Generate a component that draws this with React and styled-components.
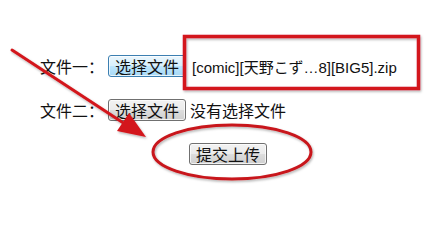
import React from "react";
import styled, { createGlobalStyle } from "styled-components";

const GlobalStyle = createGlobalStyle`
  html, body {
    margin: 0;
    padding: 0;
    background: #ffffff;
  }
`;

const Page = styled.div`
  position: relative;
  width: 432px;
  height: 227px;
  overflow: hidden;
  background: #ffffff;
  font-family: "Liberation Sans", "Noto Sans CJK SC", sans-serif;
  color: #111111;
`;

const Form = styled.form`
  display: flex;
  flex-direction: column;
  gap: 22px;
  padding: 55px 0 0 40px;
`;

const Row = styled.div`
  display: flex;
  align-items: center;
  height: 22px;
  padding-left: ${(props) => props.indent || "0"};
`;

const Label = styled.span`
  font-size: 16px;
  font-family: "Noto Sans CJK SC", sans-serif;
  margin-right: ${(props) => props.gap || "4px"};
`;

const Button = styled.button`
  height: 22px;
  padding: 0 6px;
  font-family: "Noto Sans CJK SC", sans-serif;
  font-size: 16px;
  line-height: 20px;
  color: #111111;
  border-radius: 3px;
  border: 1px solid ${(props) => (props.hover ? "#3c7fb1" : "#707070")};
  background: ${(props) =>
    props.hover
      ? "linear-gradient(#eaf6fd 0%, #d9f0fc 50%, #bee6fd 51%, #a7d9f5 100%)"
      : "linear-gradient(#f2f2f2 0%, #ebebeb 50%, #dddddd 51%, #cfcfcf 100%)"};
  box-shadow: inset 0 0 0 1px rgba(255, 255, 255, 0.7);
  margin-right: ${(props) => props.gap || "0"};
  cursor: default;
`;

const FileName = styled.span`
  font-size: 15px;
  font-family: "Liberation Sans", "Noto Sans CJK JP", sans-serif;
`;

const Status = styled.span`
  font-size: 16px;
  font-family: "Noto Sans CJK SC", sans-serif;
`;

const Overlay = styled.svg`
  position: absolute;
  left: 0;
  top: 0;
  width: 432px;
  height: 227px;
  pointer-events: none;
`;

function App() {
  return (
    <Page>
      <GlobalStyle />
      <Form>
        <Row>
          <Label>文件一：</Label>
          <Button type="button" hover gap="6px">选择文件</Button>
          <FileName>[comic][天野こず…8][BIG5].zip</FileName>
        </Row>
        <Row>
          <Label>文件二：</Label>
          <Button type="button" gap="4px">选择文件</Button>
          <Status>没有选择文件</Status>
        </Row>
        <Row indent="149px">
          <Button type="button">提交上传</Button>
        </Row>
      </Form>
      <Overlay viewBox="0 0 432 227">
        <defs>
          <filter id="sh" x="-10%" y="-10%" width="120%" height="130%">
            <feDropShadow dx="1" dy="1.5" stdDeviation="1" floodColor="#000" floodOpacity="0.3" />
          </filter>
        </defs>
        <g filter="url(#sh)">
          <rect x="184.5" y="36.5" width="234" height="52" fill="none" stroke="#d3171c" strokeWidth="3.5" />
          <ellipse cx="232" cy="152" rx="79" ry="27" fill="none" stroke="#c8161b" strokeWidth="3" />
          <line x1="12" y1="50" x2="128" y2="126" stroke="#d3171c" strokeWidth="3" strokeLinecap="round" />
          <polygon points="146,137 117,131 129,113" fill="#d3171c" />
        </g>
      </Overlay>
    </Page>
  );
}

export default App;
